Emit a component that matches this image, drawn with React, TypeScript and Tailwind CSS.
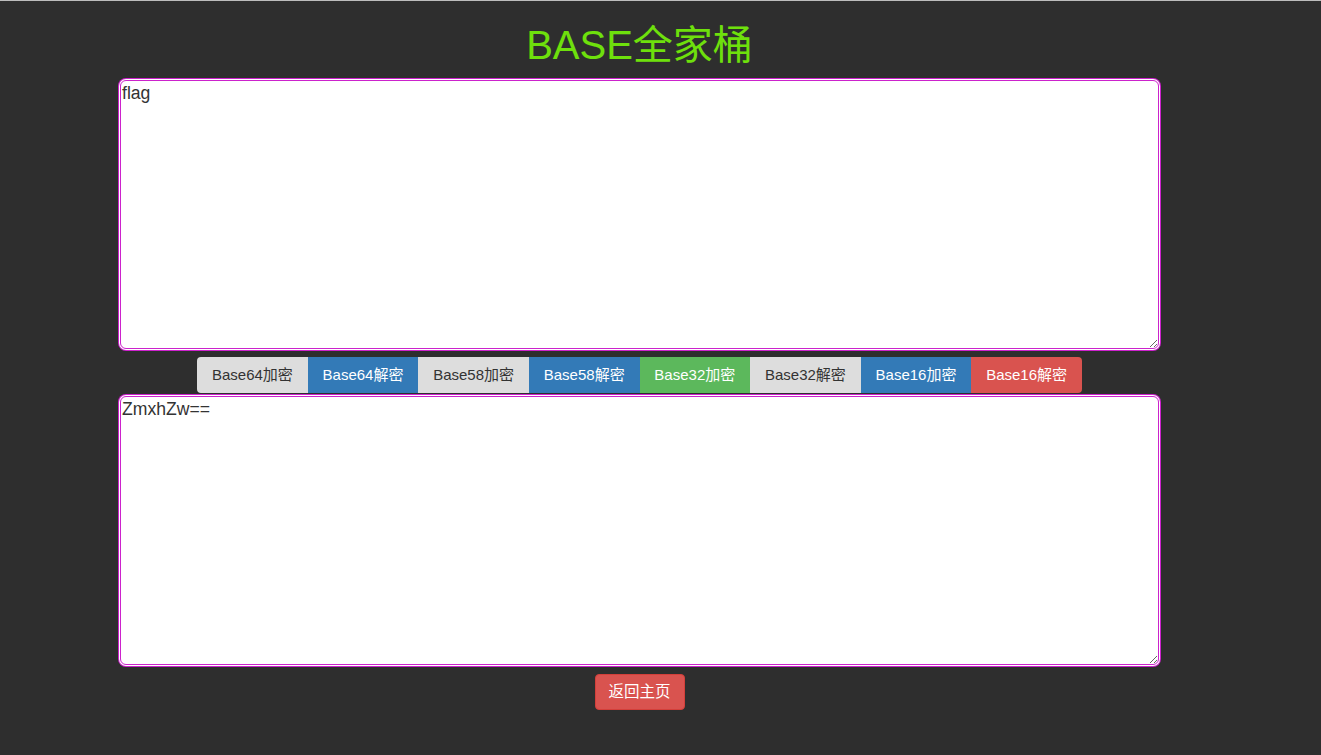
import { useState } from "react";

const buttons = [
	{ label: "Base64加密", cls: "bg-[#dddddd] text-[#333333] rounded-l-[4px]" },
	{ label: "Base64解密", cls: "bg-[#337ab7] text-white" },
	{ label: "Base58加密", cls: "bg-[#dddddd] text-[#333333]" },
	{ label: "Base58解密", cls: "bg-[#337ab7] text-white" },
	{ label: "Base32加密", cls: "bg-[#5cb85c] text-white" },
	{ label: "Base32解密", cls: "bg-[#dddddd] text-[#333333]" },
	{ label: "Base16加密", cls: "bg-[#337ab7] text-white" },
	{ label: "Base16解密", cls: "bg-[#d9534f] text-white rounded-r-[4px]" },
];

const areaStyle =
	"block w-[1039px] h-[269px] m-[2px] px-[1px] py-[2px] bg-white text-[#333333] text-[17.6px] leading-[20px] border border-[#cc22cc] rounded-[6px] shadow-[0_0_0_1px_#ffffff,0_0_0_2px_#cc22cc] outline-none resize";

export default function App() {
	const [input, setInput] = useState("flag");
	const [output, setOutput] = useState("ZmxhZw==");

	return (
		<div
			className="min-h-[755px] bg-[#2e2e2e] border-t border-[#bdbdbd]"
			style={{ fontFamily: '"Liberation Sans", Arial, "Noto Sans CJK SC", sans-serif' }}
		>
			<div className="w-[1279px] flex flex-col items-center">
				<h1 className="mt-[24px] mb-[13px] text-[40px] leading-[40px] text-[#6ee00c] font-normal">
					BASE全家桶
				</h1>
				<textarea className={areaStyle} value={input} onChange={(e) => setInput(e.target.value)} />
				<div className="flex mt-[6px] mb-[1px]">
					{buttons.map((b) => (
						<button
							key={b.label}
							className={`h-[36px] w-[110.6px] text-[15px] leading-[20px] ${b.cls}`}
						>
							{b.label}
						</button>
					))}
				</div>
				<textarea className={areaStyle} value={output} onChange={(e) => setOutput(e.target.value)} />
				<button className="mt-[7px] h-[36px] w-[90px] rounded-[4px] bg-[#d9534f] border border-[#d43f3a] text-white text-[15.5px]">
					返回主页
				</button>
			</div>
		</div>
	);
}
